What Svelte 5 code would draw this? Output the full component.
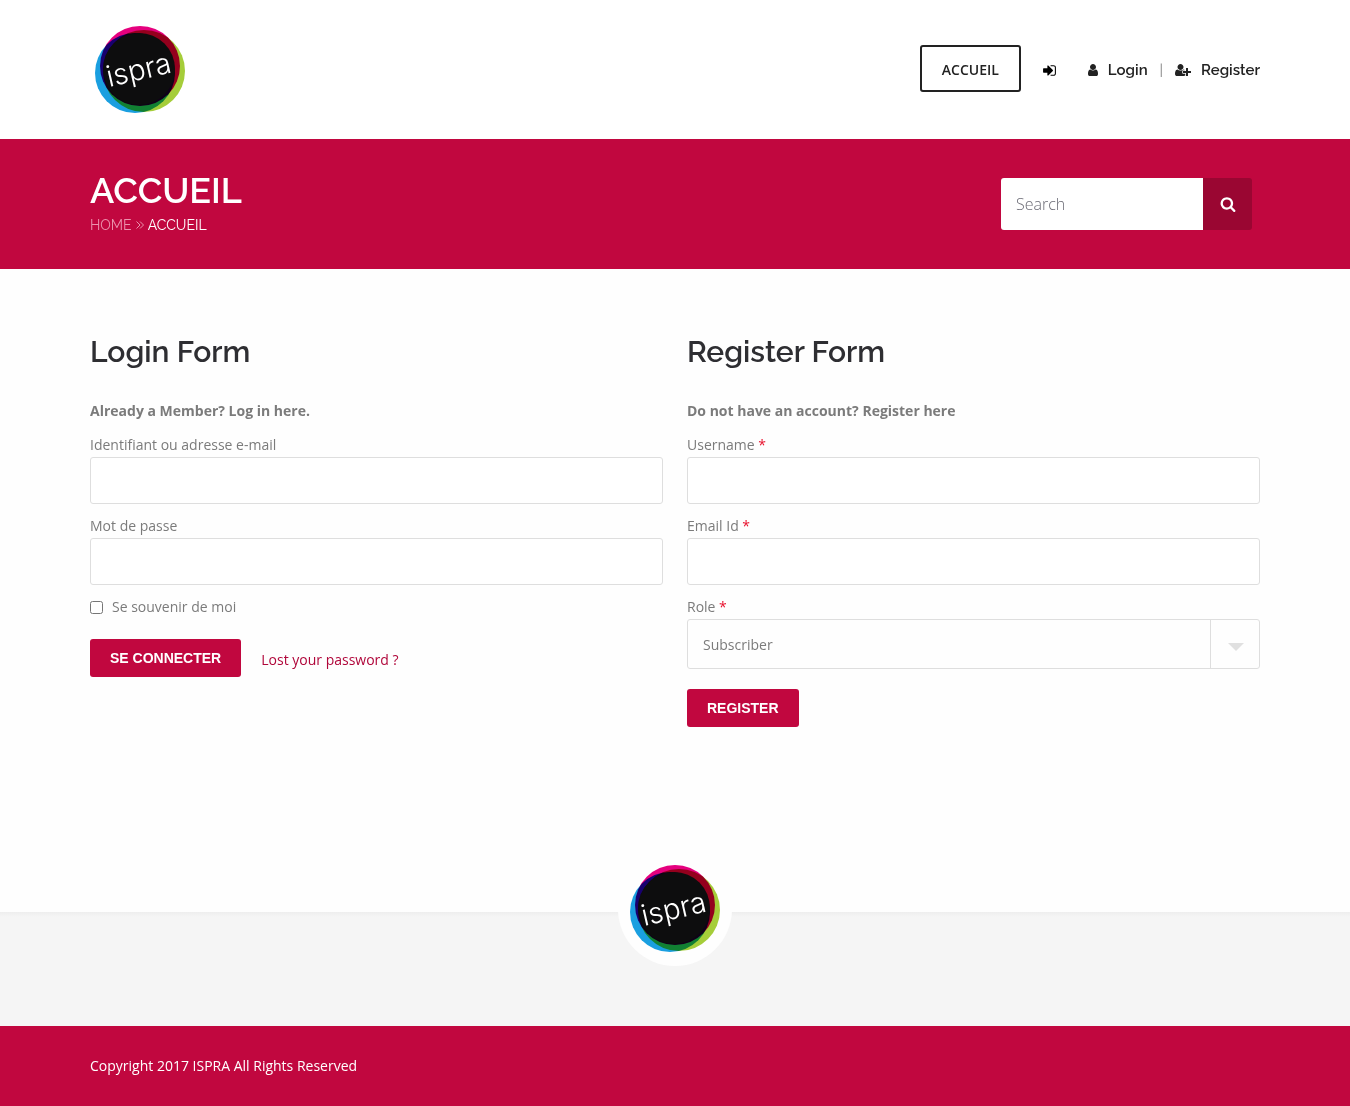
<script lang="ts">
  interface Field {
    id: string
    label: string
    type: string
    required?: boolean
  }

  const loginFields: Field[] = [
    { id: 'user_login', label: 'Identifiant ou adresse e-mail', type: 'text' },
    { id: 'user_pass', label: 'Mot de passe', type: 'password' },
  ]

  const registerFields: Field[] = [
    { id: 'reg_username', label: 'Username', type: 'text', required: true },
    { id: 'reg_email', label: 'Email Id', type: 'email', required: true },
  ]

  let remember = $state(false)
  let role = $state('subscriber')

  function submit(e: Event): void {
    e.preventDefault()
  }
</script>

{#snippet logo()}
  <svg class="logo" viewBox="0 0 90 88" role="img" aria-label="ispra">
    <g class="rings">
      <circle cx="45" cy="40" r="40" fill="#e5007e" />
      <circle cx="40" cy="47" r="40" fill="#1a9fe0" />
      <circle cx="49" cy="45" r="41" fill="#a5cd39" />
    </g>
    <circle cx="44" cy="43" r="36" fill="#0d0d0e" />
    <text x="14" y="61" transform="rotate(-13 14 61)">ispra</text>
  </svg>
{/snippet}

{#snippet field(f: Field)}
  <div class="field">
    <label for={f.id}>{f.label}{#if f.required}{' '}<span class="star">*</span>{/if}</label>
    <input id={f.id} type={f.type} required={f.required} />
  </div>
{/snippet}

<header>
  <div class="container header-row">
    <a class="brand" href="#top">{@render logo()}</a>
    <nav>
      <a class="current" href="#accueil">ACCUEIL</a>
      <a class="signin" href="#signin" aria-label="Sign in">
        <svg viewBox="0 0 1792 1792"><path d="M1312 896q0 26-19 45l-544 544q-19 19-45 19t-45-19-19-45v-288h-448q-26 0-45-19t-19-45v-384q0-26 19-45t45-19h448v-288q0-26 19-45t45-19 45 19l544 544q19 19 19 45zm352-352v704q0 119-84.5 203.5t-203.5 84.5h-320q-13 0-22.5-9.5t-9.5-22.5q0-4-1-20t-.5-26.5 3-23.5 10-19.5 20.5-6.5h320q66 0 113-47t47-113v-704q0-66-47-113t-113-47h-312l-11.5-1-11.5-3-8-5.5-7-9-2-13.5q0-4-1-20t-.5-26.5 3-23.5 10-19.5 20.5-6.5h320q119 0 203.5 84.5t84.5 203.5z" /></svg>
      </a>
      <div class="account">
        <a href="#login">
          <svg class="user" viewBox="256 0 1280 1792"><path d="M1536 1399q0 109-62.5 187t-150.5 78h-854q-88 0-150.5-78t-62.5-187q0-85 8.5-160.5t31.5-152 58.5-131 94-89 134.5-34.5q131 128 313 128t313-128q76 0 134.5 34.5t94 89 58.5 131 31.5 152 8.5 160.5zm-256-887q0 159-112.5 271.5t-271.5 112.5-271.5-112.5-112.5-271.5 112.5-271.5 271.5-112.5 271.5 112.5 112.5 271.5z" /></svg>
          Login
        </a>
        <span class="sep">|</span>
        <a href="#register">
          <svg class="user-plus" viewBox="0 0 2048 1792"><path d="M704 896q-159 0-271.5-112.5t-112.5-271.5 112.5-271.5 271.5-112.5 271.5 112.5 112.5 271.5-112.5 271.5-271.5 112.5zm960 128h352q13 0 22.5 9.5t9.5 22.5v192q0 13-9.5 22.5t-22.5 9.5h-352v352q0 13-9.5 22.5t-22.5 9.5h-192q-13 0-22.5-9.5t-9.5-22.5v-352h-352q-13 0-22.5-9.5t-9.5-22.5v-192q0-13 9.5-22.5t22.5-9.5h352v-352q0-13 9.5-22.5t22.5-9.5h192q13 0 22.5 9.5t9.5 22.5v352zm-736 224q0 52 38 90t90 38h256v238q-68 50-171 50h-874q-121 0-194-69t-73-190q0-53 3.5-103.5t14-109 26.5-108.5 43-97.5 62-81 85.5-53.5 111.5-20q19 0 39 17 79 61 154.5 91.5t164.5 30.5 164.5-30.5 154.5-91.5q20-17 39-17 132 0 217 96h-223q-52 0-90 38t-38 90v192z" /></svg>
          Register
        </a>
      </div>
    </nav>
  </div>
</header>

<section class="banner">
  <div class="container banner-row">
    <div>
      <h1>ACCUEIL</h1>
      <div class="crumbs">
        <a href="#home">HOME</a>
        <svg viewBox="0 0 8 8"><path d="M.5.5 4 4 .5 7.5M4 .5 7.5 4 4 7.5" /></svg>
        <span>ACCUEIL</span>
      </div>
    </div>
    <form class="search" role="search" onsubmit={submit}>
      <input type="text" placeholder="Search" aria-label="Search" />
      <button aria-label="Search">
        <svg viewBox="0 0 1792 1792"><path d="M1216 832q0-185-131.5-316.5t-316.5-131.5-316.5 131.5-131.5 316.5 131.5 316.5 316.5 131.5 316.5-131.5 131.5-316.5zm512 832q0 52-38 90t-90 38q-54 0-90-38l-343-342q-179 124-399 124-143 0-273.5-55.5t-225-150-150-225-55.5-273.5 55.5-273.5 150-225 225-150 273.5-55.5 273.5 55.5 225 150 150 225 55.5 273.5q0 220-124 399l343 343q37 37 37 90z" /></svg>
      </button>
    </form>
  </div>
</section>

<main class="container">
  <section>
    <h2>Login Form</h2>
    <p class="intro">Already a Member? Log in here.</p>
    <form onsubmit={submit}>
      {#each loginFields as f (f.id)}{@render field(f)}{/each}
      <label class="remember"><input type="checkbox" bind:checked={remember} />Se souvenir de moi</label>
      <div class="actions">
        <button class="btn">SE CONNECTER</button>
        <a class="lost" href="#lost">Lost your password ?</a>
      </div>
    </form>
  </section>

  <section>
    <h2>Register Form</h2>
    <p class="intro">Do not have an account? Register here</p>
    <form onsubmit={submit}>
      {#each registerFields as f (f.id)}{@render field(f)}{/each}
      <div class="field">
        <label for="reg_role">Role <span class="star">*</span></label>
        <div class="select">
          <select id="reg_role" bind:value={role}>
            <option value="subscriber">Subscriber</option>
          </select>
          <span class="arrow"></span>
        </div>
      </div>
      <div class="actions">
        <button class="btn">REGISTER</button>
      </div>
    </form>
  </section>
</main>

<footer>
  <div class="widgets">
    <a class="badge" href="#top">{@render logo()}</a>
  </div>
  <div class="copyright">
    <div class="container">Copyright 2017 ISPRA All Rights Reserved</div>
  </div>
</footer>

<style>
  :global(body) { margin: 0; background: #fefefe; font-family: 'Open Sans', sans-serif; font-size: 14px; line-height: 24px; color: #7b7b7b; }
  a { color: inherit; text-decoration: none; }
  input, select, button { box-sizing: border-box; margin: 0; font: inherit; color: inherit; }
  svg { display: block; fill: currentColor; }
  .container { box-sizing: border-box; width: 100%; max-width: 1200px; margin: 0 auto; padding: 0 15px; }

  .logo { width: 90px; height: 88px; }
  .logo text { font-family: Inter, sans-serif; font-weight: 300; font-size: 29px; fill: #fff; }
  .rings { isolation: isolate; }
  .rings circle { mix-blend-mode: multiply; }

  header { background: #fff; }
  .header-row { display: flex; align-items: center; justify-content: space-between; padding-top: 26px; padding-bottom: 25px; }
  .brand { padding-left: 5px; }
  nav { display: flex; align-items: center; color: #222; }
  .current { margin-bottom: 4px; border: 2px solid #222; border-radius: 3px; padding: 11px 20px 8px; font-weight: 600; }
  .signin { margin-left: 21px; color: #000; }
  .signin svg { width: 15px; height: 15px; }
  .account { display: flex; align-items: center; gap: 12px; margin-left: 31px; font-family: Raleway, Lato, sans-serif; font-weight: 600; font-size: 15px; }
  .account a { display: flex; align-items: center; gap: 10px; }
  .user { width: 10px; height: 14px; }
  .user-plus { width: 16px; height: 14px; }
  .sep { font-weight: 400; color: #7b7b7b; }

  .banner { background: #c1073f; color: #fff; }
  .banner-row { display: flex; justify-content: space-between; align-items: center; padding-top: 30px; padding-bottom: 30px; }
  h1 { margin: 0; font-family: Raleway, Lato, sans-serif; font-weight: 600; font-size: 36px; line-height: 42px; }
  .crumbs { display: flex; align-items: center; gap: 4px; font-family: Raleway, Lato, sans-serif; font-size: 14px; line-height: 28px; }
  .crumbs a, .crumbs svg { color: #eb93ad; }
  .crumbs svg { width: 8px; height: 8px; fill: none; stroke: currentColor; }
  .search { display: flex; margin-right: 8px; }
  .search input { width: 202px; height: 52px; border: 0; border-radius: 3px 0 0 3px; padding: 0 15px; background: #fff; font-weight: 300; font-size: 16px; color: #555; }
  .search input::placeholder { color: #6b6b75; opacity: 1; }
  .search button { display: flex; align-items: center; justify-content: center; width: 49px; height: 52px; border: 0; border-radius: 0 3px 3px 0; padding: 0; background: #9a0632; color: #fff; }
  .search svg { width: 16px; height: 16px; }

  main.container { display: grid; grid-template-columns: 1fr 1fr; gap: 24px; padding-top: 63px; padding-bottom: 185px; }
  h2 { margin: 0 0 27px; font-family: Raleway, Lato, sans-serif; font-weight: 600; font-size: 30px; line-height: 40px; color: #2e2e32; }
  .intro { margin: 0 0 10px; font-weight: 700; }
  .field { margin-bottom: 10px; }
  .field label { display: block; }
  .star { color: #e8112d; }
  .field input { display: block; width: 100%; height: 47px; border: 1px solid #dedede; border-radius: 3px; padding: 0 15px; background: #fff; }
  .select { position: relative; }
  .select select { display: block; width: 100%; height: 50px; border: 1px solid #dedede; border-radius: 3px; padding: 2px 65px 0 15px; background: #fefefe; appearance: none; }
  .arrow { position: absolute; top: 1px; right: 1px; bottom: 1px; width: 48px; border-left: 1px solid #dedede; pointer-events: none; }
  .arrow::after { content: ''; position: absolute; top: 23px; left: 17px; border: 8px solid transparent; border-top-color: #e0e0e0; border-bottom: 0; }
  .remember { display: flex; align-items: center; gap: 9px; }
  .remember input { width: 13px; height: 13px; }
  .actions { display: flex; align-items: center; gap: 20px; margin-top: 20px; }
  .btn { height: 38px; border: 0; border-radius: 3px; padding: 0 20px; background: #c1073f; color: #fff; font-family: 'Liberation Sans', sans-serif; font-weight: 700; font-size: 14px; }
  .lost { padding-top: 4px; color: #b0063a; }

  .widgets { display: flex; justify-content: center; height: 114px; background: linear-gradient(#eee, #f5f5f5 5px); }
  .badge { display: flex; align-items: center; justify-content: center; width: 114px; height: 114px; margin-top: -60px; border-radius: 50%; background: #fefefe; }
  .copyright { background: #c1073f; color: #fff; padding: 28px 0; }
</style>
